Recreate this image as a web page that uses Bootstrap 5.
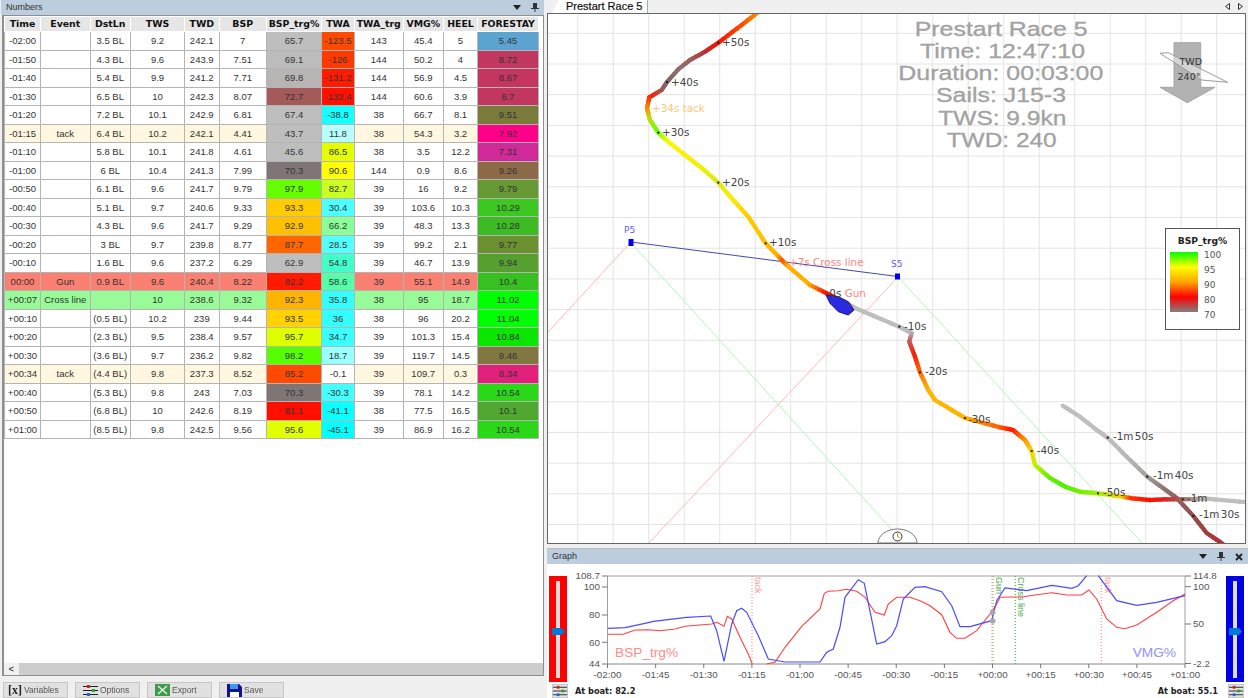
<!DOCTYPE html>
<html lang="en">
<head>
    <meta charset="UTF-8">
    <meta name="viewport" content="width=device-width, initial-scale=1.0">
    <title>Prestart Race 5</title>
    <link href="https://cdn.jsdelivr.net/npm/bootstrap@5.3.3/dist/css/bootstrap.min.css" rel="stylesheet">
    <style>
        body {
            font-family: "Liberation Sans", Arial, sans-serif;
            background-color: #f0f0f0;
            color: #333;
            overflow: hidden;
        }
        .app { width: 1248px; height: 698px; filter: blur(.45px); }

        .title-strip {
            height: 15px;
            background-color: #bccddd;
            font-size: 9px;
            color: #333;
            padding: 0 5px;
        }
        .strip-tools { gap: 10px; }

        .left-pane { width: 543px; margin-left: 1px; }
        .grid-box {
            margin-left: 1px;
            border: 1px solid #8f8f8f;
            border-left-width: 2px;
            background-color: #fff;
        }
        .num-table {
            width: 534px;
            table-layout: fixed;
            margin: 0;
            font-size: 9.5px;
            --bs-table-border-color: #b4b4b4;
        }
        .num-table > :not(caption) > * > * {
            padding: 0;
            text-align: center;
            vertical-align: middle;
            color: #333;
            height: 18.5px;
            line-height: 1;
            white-space: nowrap;
            overflow: hidden;
        }
        .num-table thead th {
            height: 15px;
            background-color: #e6e6e6;
            border: 1px solid #fff;
            color: #111;
            font-family: "DejaVu Sans", sans-serif;
            font-size: 9.4px;
            font-weight: 700;
        }
        .num-table tr.row-tack td { background-color: #fff7df; }
        .num-table tr.row-gun td { background-color: #fa8072; }
        .num-table tr.row-cross td { background-color: #98fb98; }

        .hscroll { height: 12px; background-color: #cdcdcd; }
        .hscroll-btn {
            width: 15px;
            background-color: #f0f0f0;
            color: #444;
            font-size: 9px;
            font-weight: 700;
            line-height: 12px;
            text-align: center;
        }
        .tool-row { height: 22px; gap: 7px; padding: 6px 0 0 2px; }
        .tool-btn {
            --bs-btn-padding-x: 7px;
            --bs-btn-padding-y: 0;
            --bs-btn-font-size: 8.5px;
            --bs-btn-color: #555;
            --bs-btn-bg: #e1e1e1;
            --bs-btn-border-color: #c6c6c6;
            --bs-btn-border-radius: 0;
            width: 65px;
            height: 16px;
            gap: 2px;
        }
        .x-glyph {
            font-family: "Liberation Serif", serif;
            font-size: 12px;
            font-weight: 700;
            line-height: 1;
            color: #222;
        }

        .right-pane { width: 701px; margin-left: 3px; }
        .tab-strip { height: 13px; padding-left: 5px; padding-right: 5px; }
        .doc-tab {
            width: 96px;
            background-color: #fff;
            clip-path: polygon(0 100%, 7px 0, 100% 0, 100% 100%);
            font-size: 11px;
            color: #111;
            padding-left: 14px;
            line-height: 12px;
            border-right: 1px solid #aaa;
            -webkit-text-stroke: .2px #111;
        }
        .map-box {
            width: 699px;
            height: 531px;
            border: 1px solid #666;
            background-color: #fff;
        }
        .map-svg { display: block; width: 697px; height: 529px; }
        .legend-box {
            right: 5px;
            top: 214px;
            width: 75px;
            height: 102px;
            background-color: #fff;
            border: 1px solid #555;
            padding: 7px 0 0 4px;
        }
        .legend-title {
            font-family: "DejaVu Sans", sans-serif;
            font-size: 9.2px;
            font-weight: 700;
            line-height: 10px;
            color: #222;
            text-align: center;
            padding-right: 4px;
        }
        .legend-body { margin-top: 6px; gap: 6px; }
        .legend-bar {
            width: 28px;
            height: 60px;
            background: linear-gradient(#00ff00, #ffff00 25%, #ffa500 50%, #ff0000 75%, #808080);
        }
        .legend-nums {
            height: 70px;
            margin-top: -4px;
            font-family: "DejaVu Sans", sans-serif;
            font-size: 9px;
            line-height: 15px;
            color: #555;
        }

        .graph-head { height: 16px; margin-top: 4px; border-top: 1px solid #bbb; }
        .graph-box { background-color: #fff; height: 134px; }
        .graph-svg { display: block; width: 655px; height: 120px; }
        .slider-cell { width: 22px; padding: 12px 0 0 2px; }
        .slider-cell-end { width: 24px; padding: 12px 0 0 2px; }
        .v-slider { width: 18px; height: 106px; padding: 5px 0 4px; }
        .v-slider-red { background-color: #ff0000; }
        .v-slider-blue { background-color: #0000e6; }
        .v-track { width: 4px; height: 100%; margin: 0 auto; background-color: #dcdcdc; }
        .v-thumb {
            left: 3px;
            top: 52px;
            width: 13px;
            height: 7px;
            background-color: #0078d7;
            clip-path: polygon(0 0, 75% 0, 100% 50%, 75% 100%, 0 100%);
        }
        .graph-foot { height: 14px; font-family: "DejaVu Sans", sans-serif; font-size: 8.2px; font-weight: 700; color: #222; }
        .foot-btn { width: 16px; height: 14px; margin: 0 7px 0 5px; background-color: #e4e4e4; border: 1px solid #c8c8c8; }
        .foot-btn-end { margin: 0 4px 0 10px; }
    </style>
</head>
<body>

<div class="app d-flex">

    <section class="left-pane d-flex flex-column">
        <div class="title-strip d-flex align-items-center justify-content-between">
            <span>Numbers</span>
            <span class="strip-tools d-flex align-items-center">
                <svg width="8" height="5" viewBox="0 0 8 5"><polygon points="0,0 8,0 4,5" fill="#222"/></svg>
                <svg width="8" height="9" viewBox="0 0 8 9"><path d="M2 0h4v5h2v1H4.500v3h-1V6H0V5h2z" fill="#333"/></svg>
            </span>
        </div>
        <div class="grid-box flex-grow-1 d-flex flex-column">
            <div class="flex-grow-1">
                <table class="table table-bordered num-table">
                    <colgroup id="numCols"></colgroup>
                    <thead>
                        <tr>
                            <th>Time</th><th>Event</th><th>DstLn</th><th>TWS</th><th>TWD</th><th>BSP</th><th>BSP_trg%</th><th>TWA</th><th>TWA_trg</th><th>VMG%</th><th>HEEL</th><th>FORESTAY</th>
                        </tr>
                    </thead>
                    <tbody id="numRows"></tbody>
                </table>
            </div>
            <div class="hscroll d-flex"><div class="hscroll-btn">&lt;</div></div>
        </div>
        <div class="tool-row d-flex">
            <button class="btn tool-btn d-flex align-items-center ps-1"><span class="x-glyph">[x]</span> Variables</button>
            <button class="btn tool-btn d-flex align-items-center">
                <svg width="15" height="11" viewBox="0 0 15 11"><path d="M0 1.500h15M0 5.500h15M0 9.500h15" stroke="#222"/><rect x="4" y="0" width="3" height="3" fill="#c22"/><rect x="9" y="4" width="3" height="3" fill="#2a2"/><rect x="4" y="8" width="3" height="3" fill="#26c"/></svg>
                Options
            </button>
            <button class="btn tool-btn d-flex align-items-center">
                <svg width="15" height="12" viewBox="0 0 15 12"><rect width="15" height="12" fill="#3f9a4c"/><path d="M3 2l9 8M12 2l-9 8" stroke="#dff0e0" stroke-width="1.600"/></svg>
                Export
            </button>
            <button class="btn tool-btn d-flex align-items-center save-btn">
                <svg width="15" height="13" viewBox="0 0 15 13"><path d="M0 0h12l3 3v10H0z" fill="#12128c"/><rect x="3" y="0" width="8" height="5" fill="#3a9cf0"/><rect x="3" y="8" width="9" height="5" fill="#fff"/></svg>
                Save
            </button>
        </div>
    </section>

    <section class="right-pane d-flex flex-column">
        <div class="tab-strip d-flex justify-content-between">
            <div class="doc-tab">Prestart Race 5</div>
            <div class="d-flex align-items-center gap-2">
                <svg width="5" height="7" viewBox="0 0 5 7"><polygon points="4.500,.500 4.500,6.500 .500,3.500" fill="#eee" stroke="#333"/></svg>
                <svg width="5" height="7" viewBox="0 0 5 7"><polygon points=".500,.500 .500,6.500 4.500,3.500" fill="#eee" stroke="#333"/></svg>
            </div>
        </div>
        <div class="map-box position-relative">
            <svg id="map" class="map-svg" viewBox="548 14 697 529" font-family="DejaVu Sans, sans-serif" font-size="10.400" fill="#444">
                <g id="mapGrid" stroke="#e4e4e4" stroke-width="1"></g>

                <g fill="#a2a2a2" stroke="#a2a2a2" stroke-width=".3" font-family="Liberation Sans, Arial, sans-serif" font-size="19.500" text-anchor="start">
                    <text x="914.700" y="35.700" textLength="173" lengthAdjust="spacingAndGlyphs">Prestart Race 5</text>
                    <text x="920" y="58" textLength="165" lengthAdjust="spacingAndGlyphs">Time: 12:47:10</text>
                    <text x="898.300" y="80" textLength="205" lengthAdjust="spacingAndGlyphs">Duration: 00:03:00</text>
                    <text x="936" y="102.400" textLength="130" lengthAdjust="spacingAndGlyphs">Sails: J15-3</text>
                    <text x="938.300" y="124.700" textLength="128" lengthAdjust="spacingAndGlyphs">TWS: 9.9kn</text>
                    <text x="946.700" y="146.700" textLength="110" lengthAdjust="spacingAndGlyphs">TWD: 240</text>
                </g>

                <polygon points="1174,42.700 1200.700,42.700 1200.700,87.300 1215,87.300 1187.300,102.700 1160,87.300 1174,87.300" fill="#b2b2b2" stroke="#a4a4a4"/>
                <polygon points="1160,53.300 1168.300,52.700 1227.700,82.300 1201.700,80" fill="#fff" fill-opacity=".45" stroke="#9c9c9c"/>
                <text x="1190.700" y="65" text-anchor="middle" fill="#333" font-size="9.500">TWD</text>
                <text x="1189" y="80" text-anchor="middle" fill="#333" font-size="9.500">240°</text>

                <g stroke-width="1" fill="none">
                    <line x1="631" y1="242" x2="548" y2="332" stroke="#ffb8b8"/>
                    <line x1="897" y1="278" x2="648" y2="544" stroke="#ffb8b8"/>
                    <line x1="633" y1="245" x2="905" y2="544" stroke="#b8f2b8"/>
                    <line x1="900" y1="279" x2="1143" y2="544" stroke="#b8f2b8"/>
                    <line x1="631" y1="242" x2="897.500" y2="276.500" stroke="#4848b0"/>
                </g>

                <g id="track" fill="none" stroke-width="4.300" stroke-linecap="round"></g>

                <path d="M826 295L838.300 296.700 848.300 301.700 854 310 848.300 315 838.300 311.700 830 303.300z" fill="#2a2ae0" stroke="#1c1c70"/>
                <rect x="628.500" y="239" width="5" height="7" fill="#0000f0"/>
                <rect x="895" y="273.500" width="5" height="6" fill="#0000f0"/>
                <g fill="#5a5aff" font-size="9">
                    <text x="624" y="233">P5</text>
                    <text x="891" y="267">S5</text>
                </g>

                <g id="trackDots" fill="#111"></g>
                <text x="722" y="46">+50s</text>
                <text x="671" y="85.500">+40s</text>
                <text x="652" y="111.500" fill="#ffc878">+34s tack</text>
                <text x="662" y="136">+30s</text>
                <text x="722" y="186">+20s</text>
                <text x="769" y="246">+10s</text>
                <text x="789" y="265.500" fill="#ff8484">+7s Cross line</text>
                <text x="829.300" y="297">0s <tspan fill="#ff8484">Gun</tspan></text>
                <text x="904" y="330">-10s</text>
                <text x="925" y="375">-20s</text>
                <text x="968" y="423">-30s</text>
                <text x="1036.700" y="454">-40s</text>
                <text x="1103" y="496">-50s</text>
                <text x="1187" y="501.500">-1m</text>
                <g word-spacing="-2">
                    <text x="1113" y="440">-1m 50s</text>
                    <text x="1153" y="479">-1m 40s</text>
                    <text x="1199" y="518">-1m 30s</text>
                </g>

                <path d="M878 543a19.500 14 0 0 1 39 0z" fill="#fff" stroke="#777"/>
                <circle cx="897.500" cy="536.500" r="4.500" fill="#fff" stroke="#333"/>
                <path d="M897.500 533.500v3l2 1" fill="none" stroke="#c77a10"/>
            </svg>
            <div class="legend-box position-absolute">
                <div class="legend-title">BSP_trg%</div>
                <div class="legend-body d-flex">
                    <div class="legend-bar"></div>
                    <div class="legend-nums">100<br>95<br>90<br>80<br>70</div>
                </div>
            </div>
        </div>

        <div class="graph-head title-strip d-flex align-items-center justify-content-between">
            <span>Graph</span>
            <span class="strip-tools d-flex align-items-center">
                <svg width="8" height="5" viewBox="0 0 8 5"><polygon points="0,0 8,0 4,5" fill="#222"/></svg>
                <svg width="8" height="9" viewBox="0 0 8 9"><path d="M2 0h4v5h2v1H4.500v3h-1V6H0V5h2z" fill="#333"/></svg>
                <svg width="8" height="8" viewBox="0 0 8 8"><path d="M1 1l6 6M7 1L1 7" stroke="#222" stroke-width="1.800"/></svg>
            </span>
        </div>
        <div class="graph-box d-flex flex-column">
            <div class="d-flex">
                <div class="slider-cell">
                    <div class="v-slider v-slider-red position-relative">
                        <div class="v-track"></div>
                        <div class="v-thumb position-absolute"></div>
                    </div>
                </div>
                <svg id="chart" class="graph-svg" viewBox="569 565 655 120" font-family="Liberation Sans, Arial, sans-serif" font-size="9.800" fill="#555">
                    <g stroke="#a0a0a0" fill="none">
                        <path d="M607.500 665V577H1185V665"/>
                        <path d="M607.500 665H1185" stroke="#888"/>
                    </g>
                    <g id="chartTicks" stroke="#777"></g>

                    <g stroke-dasharray="1 2" stroke-width="1.200" fill="none">
                        <line x1="752" y1="577" x2="752" y2="665" stroke="#ff9090"/>
                        <line x1="993" y1="577" x2="993" y2="665" stroke="#5cb85c"/>
                        <line x1="992" y1="577" x2="992" y2="665" stroke="#ff9090"/>
                        <line x1="1015.300" y1="577" x2="1015.300" y2="665" stroke="#3cb84c"/>
                        <line x1="1101.300" y1="577" x2="1101.300" y2="665" stroke="#ff9090"/>
                    </g>
                    <text transform="translate(754.500,578) rotate(90)" fill="#ff9a9a" font-size="9">tack</text>
                    <text transform="translate(996,578) rotate(90)" fill="#4aa84a" font-size="9">Gun</text>
                    <text transform="translate(1018.300,578) rotate(90)" fill="#4aa84a" font-size="9">Cross line</text>
                    <text transform="translate(1105,578) rotate(90)" fill="#ff9a9a" font-size="9">tack</text>

                    <polyline id="lineRed" fill="none" stroke="#ff4040" stroke-width="1.100"/>
                    <polyline id="lineRed2" fill="none" stroke="#ff4040" stroke-width="1.100"/>
                    <polyline id="lineBlue" fill="none" stroke="#4a4aff" stroke-width="1.200"/>
                    <polyline id="lineBlue2" fill="none" stroke="#4a4aff" stroke-width="1.200"/>
                    <circle cx="992.700" cy="613.300" r="2.800" fill="#a8a8a8"/>
                    <circle cx="992.700" cy="622" r="2.800" fill="#a8a8a8"/>

                    <text x="615" y="658" font-size="13.700" fill="#ff8c8c">BSP_trg%</text>
                    <text x="1132.700" y="658" font-size="13.700" fill="#9090ff">VMG%</text>
                </svg>
                <div class="slider-cell-end">
                    <div class="v-slider v-slider-blue position-relative">
                        <div class="v-track"></div>
                        <div class="v-thumb position-absolute"></div>
                    </div>
                </div>
            </div>
            <div class="graph-foot d-flex align-items-center">
                <div class="foot-btn d-flex">
                    <svg width="14" height="12" viewBox="0 0 15 11"><path d="M0 1.500h15M0 5.500h15M0 9.500h15" stroke="#222"/><rect x="4" y="0" width="3" height="3" fill="#c22"/><rect x="9" y="4" width="3" height="3" fill="#2a2"/><rect x="4" y="8" width="3" height="3" fill="#26c"/></svg>
                </div>
                <span>At boat: 82.2</span>
                <span class="ms-auto">At boat: 55.1</span>
                <div class="foot-btn foot-btn-end d-flex">
                    <svg width="14" height="12" viewBox="0 0 15 11"><path d="M0 1.500h15M0 5.500h15M0 9.500h15" stroke="#222"/><rect x="4" y="0" width="3" height="3" fill="#c22"/><rect x="9" y="4" width="3" height="3" fill="#2a2"/><rect x="4" y="8" width="3" height="3" fill="#26c"/></svg>
                </div>
            </div>
        </div>
    </section>
</div>

<script src="https://cdn.jsdelivr.net/npm/bootstrap@5.3.3/dist/js/bootstrap.bundle.min.js"></script>
<script>
    const colWidths = [36, 49.5, 40.5, 54, 34.5, 47.5, 55, 33, 48.5, 40.5, 34, 61];
    document.getElementById("numCols").innerHTML = colWidths.map(w => `<col style="width:${w}px">`).join("");

    // time, event, dstLn, tws, twd, bsp, [bspTrg, colour], [twa, colour], twaTrg, vmg, heel, [forestay, colour]
    const rows = [
        ["-02:00","","3.5 BL","9.2","242.1","7",["65.7","#bebebe"],["-123.5","#ff4a00"],"143","45.4","5",["5.45","#5ba3d0"]],
        ["-01:50","","4.3 BL","9.6","243.9","7.51",["69.1","#bcbcbc"],["-126","#ff3a00"],"144","50.2","4",["8.72","#c0385f"]],
        ["-01:40","","5.4 BL","9.9","241.2","7.71",["69.8","#b8b4b4"],["-131.2","#ff1a00"],"144","56.9","4.5",["8.67","#c4355f"]],
        ["-01:30","","6.5 BL","10","242.3","8.07",["72.7","#a55a5a"],["-132.4","#ff1000"],"144","60.6","3.9",["8.7","#c2375f"]],
        ["-01:20","","7.2 BL","10.1","242.9","6.81",["67.4","#bebebe"],["-38.8","#18ffff"],"38","66.7","8.1",["9.51","#7a7a3a"]],
        ["-01:15","tack","6.4 BL","10.2","242.1","4.41",["43.7","#bebebe"],["11.8","#b8ffff"],"38","54.3","3.2",["7.92","#ff0088"]],
        ["-01:10","","5.8 BL","10.1","241.8","4.61",["45.6","#bebebe"],["86.5","#e6ff00"],"38","3.5","12.2",["7.31","#d02a98"]],
        ["-01:00","","6 BL","10.4","241.3","7.99",["70.3","#807575"],["90.6","#ffff00"],"144","0.9","8.6",["9.26","#8c6a48"]],
        ["-00:50","","6.1 BL","9.6","241.7","9.79",["97.9","#66ff00"],["82.7","#ccff22"],"39","16","9.2",["9.79","#669933"]],
        ["-00:40","","5.1 BL","9.7","240.6","9.33",["93.3","#ffcc00"],["30.4","#4dffff"],"39","103.6","10.3",["10.29","#3cc820"]],
        ["-00:30","","4.3 BL","9.6","241.7","9.29",["92.9","#ffc000"],["66.2","#88ff99"],"39","48.3","13.3",["10.28","#3dbb22"]],
        ["-00:20","","3 BL","9.7","239.8","8.77",["87.7","#ff6600"],["28.5","#55ffff"],"39","99.2","2.1",["9.77","#6a9030"]],
        ["-00:10","","1.6 BL","9.6","237.2","6.29",["62.9","#bebebe"],["54.8","#44ffcc"],"39","46.7","13.9",["9.94","#56a030"]],
        ["00:00","Gun","0.9 BL","9.6","240.4","8.22",["82.2","#ff1a00"],["58.6","#55ffaa"],"39","55.1","14.9",["10.4","#38c020"]],
        ["+00:07","Cross line","","10","238.6","9.32",["92.3","#ffb400"],["35.8","#33ffff"],"38","95","18.7",["11.02","#00ff00"]],
        ["+00:10","","(0.5 BL)","10.2","239","9.44",["93.5","#ffd200"],["36","#33ffff"],"38","96","20.2",["11.04","#00ff00"]],
        ["+00:20","","(2.3 BL)","9.5","238.4","9.57",["95.7","#ddff00"],["34.7","#3bffff"],"39","101.3","15.4",["10.84","#0ae600"]],
        ["+00:30","","(3.6 BL)","9.7","236.2","9.82",["98.2","#55ff00"],["18.7","#99ffff"],"39","119.7","14.5",["9.46","#807840"]],
        ["+00:34","tack","(4.4 BL)","9.8","237.3","8.52",["85.2","#ff4a00"],["-0.1","#ffffff"],"39","109.7","0.3",["8.34","#e0207a"]],
        ["+00:40","","(5.3 BL)","9.8","243","7.03",["70.3","#807575"],["-30.3","#44ffff"],"39","78.1","14.2",["10.54","#2ad818"]],
        ["+00:50","","(6.8 BL)","10","242.6","8.19",["81.1","#ff0f00"],["-41.1","#0affff"],"38","77.5","16.5",["10.1","#50a830"]],
        ["+01:00","","(8.5 BL)","9.8","242.5","9.56",["95.6","#e0ff00"],["-45.1","#00ffff"],"39","86.9","16.2",["10.54","#2ad818"]]
    ];
    const rowClass = { "tack": "row-tack", "Gun": "row-gun", "Cross line": "row-cross" };
    document.getElementById("numRows").innerHTML = rows.map(r => {
        const cells = r.map(c => Array.isArray(c)
            ? `<td style="background-color:${c[1]}">${c[0]}</td>`
            : `<td>${c}</td>`).join("");
        return `<tr class="${rowClass[r[1]] || ""}">${cells}</tr>`;
    }).join("");

    // map grid
    let grid = "";
    for (let x = 577.7; x < 1245; x += 35.5) grid += `<line x1="${x}" y1="14" x2="${x}" y2="544"/>`;
    for (let y = 33.3; y < 544; y += 30.7) grid += `<line x1="548" y1="${y}" x2="1245" y2="${y}"/>`;
    document.getElementById("mapGrid").innerHTML = grid;

    // boat track, coloured by BSP_trg%
    const trackA = [
        [756.7,13.3,"#ff9000"],[741.7,25,"#ff5000"],[718.3,42.7,"#ff1500"],[705,51.7,"#c82828"],[690,60,"#a05a5a"],
        [678.3,69.3,"#907070"],[667,82,"#806a6a"],[661.7,90,"#906060"],[649.3,97.3,"#ff2000"],[647,108.3,"#ff8000"],
        [650,120,"#c0e000"],[658.3,132.7,"#66ff00"],[668.3,141.7,"#eeff00"],[685,155,"#ffee00"],[705,170.7,"#f0f000"],
        [718.3,182.7,"#d8e820"],[731.7,198.3,"#ffee00"],[748.3,216.7,"#ffcc00"],[765.7,243.3,"#ffc000"],[778,256,"#ffb000"],
        [783.3,261.7,"#ff5000"],[789,267,"#ffb000"],[810,285,"#ffb000"],[826.7,293.3,"#ff1000"],[840,300,"#ff1000"],
        [855,308,"#bebebe"],[899.3,326.7,"#bebebe"],[911.7,333,"#b8b8c8"],[909.3,341.7,"#c06060"],[915,356.7,"#ff1800"],
        [920,372.3,"#ff6600"],[928.3,390,"#ffb000"],[935,400,"#ffb800"],[965,418,"#ffb000"],[1000,427.3,"#ff6000"],
        [1013,430,"#ff1000"],[1025,440,"#ff9000"],[1031.7,451,"#ffd000"],[1035,465,"#c8f000"],[1050,478,"#66f000"],
        [1065,486.7,"#50f000"],[1080,491.7,"#70f000"],[1098,493.3,"#99f000"],[1123,496.7,"#ffd000"],[1131.7,498.3,"#ff3000"],
        [1150,500,"#ff1000"],[1166.7,499.3,"#e02020"],[1182.7,499.3,"#a06060"],[1206.7,498.7,"#bebebe"],[1248,502.3,"#bebebe"]
    ];
    const trackB = [
        [1062.7,405.7,"#bebebe"],[1080,416.7,"#bebebe"],[1096.7,430,"#bebebe"],[1107.7,437.7,"#bebebe"],[1126.7,456.7,"#b8b8b8"],
        [1147.3,476.7,"#a8a0a0"],[1163,488,"#907878"],[1176.7,498,"#906060"],[1193.3,516,"#905050"],[1206.7,533,"#a04040"],[1223,544,"#b03030"]
    ];
    function hexToRgb(h) {
        return [1, 3, 5].map(i => parseInt(h.substr(i, 2), 16));
    }
    function drawTrack(points) {
        let out = "";
        for (let i = 0; i < points.length - 1; i++) {
            const a = points[i], b = points[i + 1];
            const ca = hexToRgb(a[2]), cb = hexToRgb(b[2]);
            const steps = 5;
            for (let s = 0; s < steps; s++) {
                const t0 = s / steps, t1 = (s + 1) / steps;
                const col = ca.map((v, k) => Math.round(v + (cb[k] - v) * (t0 + t1) / 2));
                out += `<line x1="${a[0] + (b[0] - a[0]) * t0}" y1="${a[1] + (b[1] - a[1]) * t0}" x2="${a[0] + (b[0] - a[0]) * t1}" y2="${a[1] + (b[1] - a[1]) * t1}" stroke="rgb(${col})"/>`;
            }
        }
        return out;
    }
    document.getElementById("track").innerHTML = drawTrack(trackB) + drawTrack(trackA);

    const dots = [[718.3,42.7],[667,82],[658.3,132.7],[718.3,182.7],[765.7,243.3],[899.3,326.7],[920,372.3],[965,418],[1031.7,451],[1098,493.3],[1182.7,499.3],[1107.7,437.7],[1147.3,476.7],[1193.3,516]];
    document.getElementById("trackDots").innerHTML = dots.map(d => `<circle cx="${d[0]}" cy="${d[1]}" r="1.1"/>`).join("");

    // chart axes
    let ticks = "", labels = "";
    const xLabels = ["-02:00","-01:45","-01:30","-01:15","-01:00","-00:45","-00:30","-00:15","+00:00","+00:15","+00:30","+00:45","+01:00"];
    xLabels.forEach((t, i) => {
        const x = 607.5 + i * 48.125;
        ticks += `<line x1="${x}" y1="665" x2="${x}" y2="669"/>`;
        labels += `<text x="${x}" y="679" text-anchor="middle">${t}</text>`;
    });
    [["108.7",577],["100",588],["80",616],["60",643.3],["44",665]].forEach(t => {
        ticks += `<line x1="602" y1="${t[1]}" x2="607.5" y2="${t[1]}"/>`;
        labels += `<text x="600" y="${t[1] + 3.2}" text-anchor="end">${t[0]}</text>`;
    });
    [["114.8",577],["100",587.7],["50",625],["-2.2",664.5]].forEach(t => {
        ticks += `<line x1="1185" y1="${t[1]}" x2="1191" y2="${t[1]}"/>`;
        labels += `<text x="1193" y="${t[1] + 3.2}">${t[0]}</text>`;
    });
    document.getElementById("chartTicks").innerHTML = ticks + `<g stroke="none" fill="#555">${labels}</g>`;

    const redA = "607.7,635.3 623.3,635.3 635,631 648.3,630.7 660,631.7 675,630 685,627.3 711.7,625 716.7,623.3 724,627.3 727.3,617.3 731.7,620 741.7,641.7 748.3,655 752.3,665";
    const redB = "766.7,665 775,663.3 785,648.3 801.7,627.3 820,610 824.3,594.3 828.3,592.3 838.3,591.7 846.7,590.3 856.7,592.3 865,598.3 875,613.3 884.3,616 888.3,605 896.7,598.3 910,598.3 920,601.7 930,606.7 941.7,615.7 950,633.3 956.7,639.3 965,639.3 976.7,631.7 990,615 996.7,605 1000,598.3 1023.3,597.7 1036.7,595.7 1051.7,593.7 1066.7,596 1081.7,596 1089,591 1096.7,600 1106.7,620 1116.7,628.3 1125,629.7 1136.7,626 1156.7,613.3 1173.3,601.7 1185,595";
    const blueA = "607.7,629.3 625,628.7 645,624.3 653.3,622.3 686.7,618.3 710.7,617 716.7,631.7 724,662.3 731.7,625 736.7,611.7 741.7,609.3 746.7,613.3 758.3,636.7 768.3,660 785,663 820,663 826.7,653.3 833.3,650 840,628.3 845,598.3 858.3,580.7 864.3,584.3 876.7,645 885,642.7 891.7,636.7 896.7,626.7 903.3,600 915,588.3 925,587.7 941.7,592.7 951.7,606.7 960,627.7 970,627.7 991.7,621.7 996.7,601.7 1005,589 1026.7,591.7 1051.7,586.3 1071.7,589.3 1078.3,586.7 1086.7,576.7";
    const blueB = "1098.3,576.7 1116.7,601.7 1136.7,606.3 1156.7,603.3 1185,596.7";
    document.getElementById("lineRed").setAttribute("points", redA);
    document.getElementById("lineRed2").setAttribute("points", redB);
    document.getElementById("lineBlue").setAttribute("points", blueA);
    document.getElementById("lineBlue2").setAttribute("points", blueB);
</script>

</body>
</html>
